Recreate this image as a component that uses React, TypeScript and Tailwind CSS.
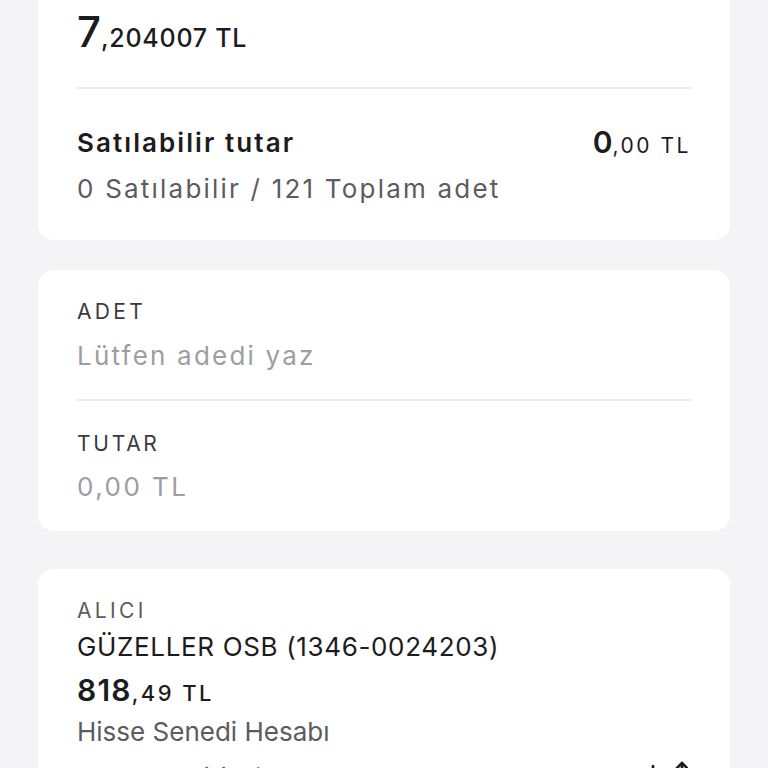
import React from "react";

const font = { fontFamily: '"Inter", "Liberation Sans", sans-serif' };

const Amount = ({ whole, rest, big, small }: { whole: string; rest: string; big: string; small: string }) => (
  <span className="flex items-baseline text-[#1c1c1e]">
    <span className={big}>{whole}</span>
    <span className={small}>{rest}</span>
  </span>
);

const Divider = ({ className }: { className: string }) => (
  <div className={"h-[2px] bg-[#ececef] " + className} />
);

const SwapIcon = () => (
  <svg className="mr-[3px]" width="40" height="34" viewBox="0 0 40 34" fill="none" stroke="#1c1c1e" strokeWidth="2.6" strokeLinecap="round" strokeLinejoin="round">
    <path d="M5 6v24" />
    <path d="M-1 24l6 6 6-6" />
    <path d="M34 3v25" />
    <path d="M28 9l6-6 6 6" />
  </svg>
);

const App = () => {
  return (
    <div className="h-[768px] overflow-hidden bg-[#f4f4f6] px-[38px]" style={font}>
      {/* satış özeti */}
      <div className="bg-white rounded-b-2xl px-[39px] pb-[34px]">
        <div className="h-[62px] flex items-center">
          <Amount
            whole="7"
            rest=",204007 TL"
            big="text-[42px] font-medium"
            small="text-[25px] font-medium tracking-[0.03em]"
          />
        </div>
        <Divider className="mt-[25px]" />
        <div className="mt-[35px] h-[36px] flex items-center justify-between">
          <span className="text-[26px] font-semibold text-[#1c1c1e] tracking-[0.08em]">Satılabilir tutar</span>
          <Amount
            whole="0"
            rest=",00 TL"
            big="text-[30px] font-semibold"
            small="text-[21px] tracking-[0.12em]"
          />
        </div>
        <div className="mt-[10px] h-[36px] flex items-center text-[26px] text-[#5b5b60] tracking-[0.085em]">
          0 Satılabilir / 121 Toplam adet
        </div>
      </div>

      {/* adet / tutar girişi */}
      <div className="mt-[30px] bg-white rounded-2xl px-[39px] pt-[28px] pb-[27px]">
        <div className="h-[28px] flex items-center text-[21px] tracking-[0.16em] text-[#3a3a3e]">ADET</div>
        <div className="mt-[11px] h-[36px] flex items-center text-[26px] text-[#9d9da2] tracking-[0.085em]">
          Lütfen adedi yaz
        </div>
        <Divider className="mt-[26px]" />
        <div className="mt-[29px] h-[28px] flex items-center text-[21px] tracking-[0.13em] text-[#3a3a3e]">TUTAR</div>
        <div className="mt-[10px] h-[36px] flex items-center text-[26px] text-[#9d9da2] tracking-[0.095em]">
          0,00 TL
        </div>
      </div>

      {/* alıcı hesap */}
      <div className="mt-[38px] bg-white rounded-2xl px-[39px] pt-[28px] pb-[30px]">
        <div className="h-[28px] flex items-center text-[21px] tracking-[0.16em] text-[#5b5b60]">ALICI</div>
        <div className="mt-[3px] h-[36px] flex items-center text-[26px] text-[#1c1c1e] tracking-[0.025em]">
          GÜZELLER OSB (1346-0024203)
        </div>
        <div className="mt-[6px] h-[40px] flex items-center">
          <Amount
            whole="818"
            rest=",49 TL"
            big="text-[30px] font-semibold tracking-[0.04em]"
            small="text-[22px] font-medium tracking-[0.11em]"
          />
        </div>
        <div className="mt-[3px] h-[36px] flex items-center text-[26px] text-[#5b5b60]">
          Hisse Senedi Hesabı
        </div>
        <div className="mt-[10px] h-[36px] flex items-center justify-between text-[26px] text-[#5b5b60] tracking-[0.085em]">
          <span>0 Satılabilir / 121 Toplam adet</span>
          <SwapIcon />
        </div>
      </div>
    </div>
  );
};

export default App;
